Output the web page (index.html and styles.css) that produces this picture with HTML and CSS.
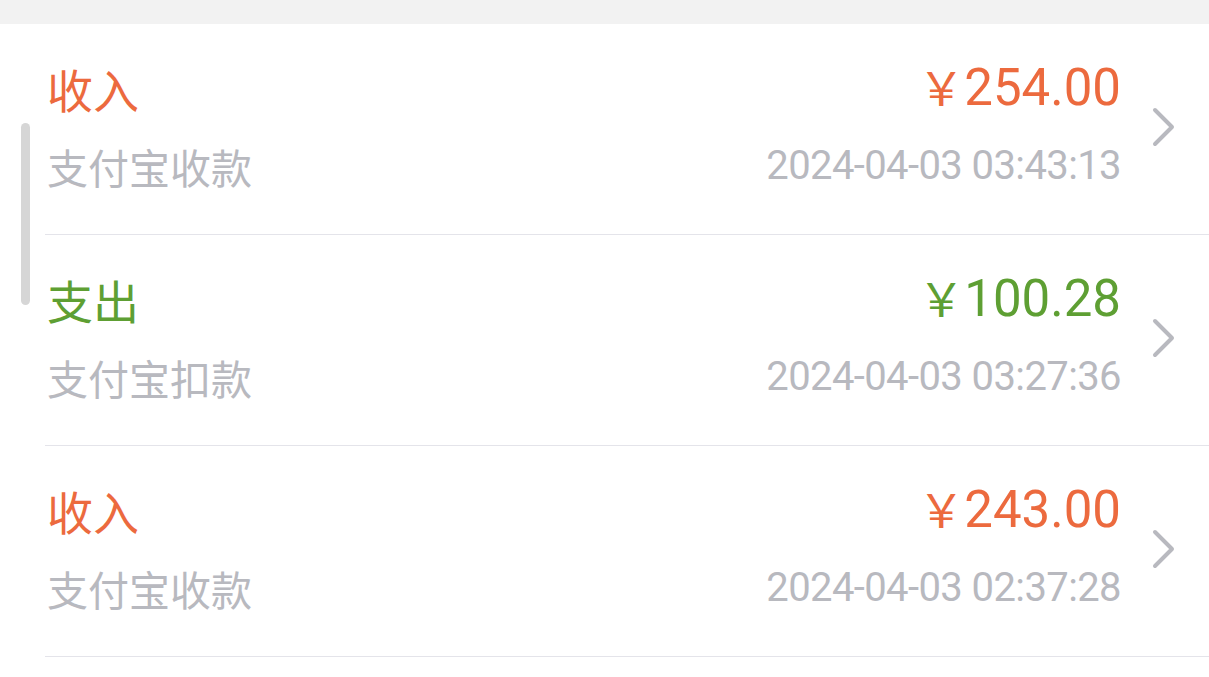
FILE: index.html
```html
<!DOCTYPE html>
<html lang="zh-CN">
<head>
  <meta charset="UTF-8" />
  <title>账单明细</title>
  <link rel="stylesheet" href="styles.css">
</head>
<body>
  <div class="topbar"></div>

  <ul class="bill-list">
    <li class="bill">
      <div class="bill-info">
        <div class="bill-type income">收入</div>
        <div class="bill-desc">支付宝收款</div>
      </div>
      <div class="bill-meta">
        <div class="bill-amount income"><span class="yen">￥</span>254.00</div>
        <div class="bill-time">2024-04-03 03:43:13</div>
      </div>
      <svg class="chevron" viewBox="0 0 24 40" width="24" height="40">
        <path d="M3 3 L20 20 L3 37" />
      </svg>
    </li>
    <li class="bill">
      <div class="bill-info">
        <div class="bill-type expense">支出</div>
        <div class="bill-desc">支付宝扣款</div>
      </div>
      <div class="bill-meta">
        <div class="bill-amount expense"><span class="yen">￥</span>100.28</div>
        <div class="bill-time">2024-04-03 03:27:36</div>
      </div>
      <svg class="chevron" viewBox="0 0 24 40" width="24" height="40">
        <path d="M3 3 L20 20 L3 37" />
      </svg>
    </li>
    <li class="bill">
      <div class="bill-info">
        <div class="bill-type income">收入</div>
        <div class="bill-desc">支付宝收款</div>
      </div>
      <div class="bill-meta">
        <div class="bill-amount income"><span class="yen">￥</span>243.00</div>
        <div class="bill-time">2024-04-03 02:37:28</div>
      </div>
      <svg class="chevron" viewBox="0 0 24 40" width="24" height="40">
        <path d="M3 3 L20 20 L3 37" />
      </svg>
    </li>
  </ul>

  <div class="scrollbar"></div>
</body>
</html>
```

FILE: styles.css
```css
body {
  margin: 0;
  background: #ffffff;
  font-family: "Roboto", "Noto Sans CJK SC", sans-serif;
  overflow: hidden;
}
.topbar {
  height: 24px;
  background: #f2f2f2;
}
.bill-list {
  list-style: none;
  margin: 0 0 0 45px;
  padding: 0;
}
.bill {
  display: flex;
  align-items: center;
  height: 211px;
  box-sizing: border-box;
  padding: 0 33px 5px 2px;
  border-bottom: 1px solid #e4e4ea;
}
.bill-info {
  flex: 1;
}
.bill-type {
  font-family: "Noto Sans CJK SC", sans-serif;
  font-size: 46px;
  line-height: 56px;
}
.bill-desc {
  font-family: "Noto Sans CJK SC", sans-serif;
  font-size: 41px;
  line-height: 56px;
  margin-top: 22px;
  color: #b8b9bf;
}
.income {
  color: #ec6a3e;
}
.expense {
  color: #5e9f33;
}
.bill-meta {
  text-align: right;
}
.bill-amount {
  height: 56px;
  font-size: 51px;
  line-height: 56px;
}
.yen {
  font-family: "Noto Sans CJK SC", sans-serif;
  font-size: 46px;
  line-height: 1;
}
.bill-time {
  height: 56px;
  font-size: 40px;
  line-height: 56px;
  letter-spacing: -0.6px;
  margin-top: 22px;
  color: #b8b9bf;
}
.chevron {
  margin-left: 31px;
  fill: none;
  stroke: #b8b9bf;
  stroke-width: 4;
  stroke-linecap: round;
  stroke-linejoin: round;
}
.scrollbar {
  position: absolute;
  left: 21px;
  top: 123px;
  width: 9px;
  height: 182px;
  border-radius: 5px;
  background: #d6d6d6;
}
```
